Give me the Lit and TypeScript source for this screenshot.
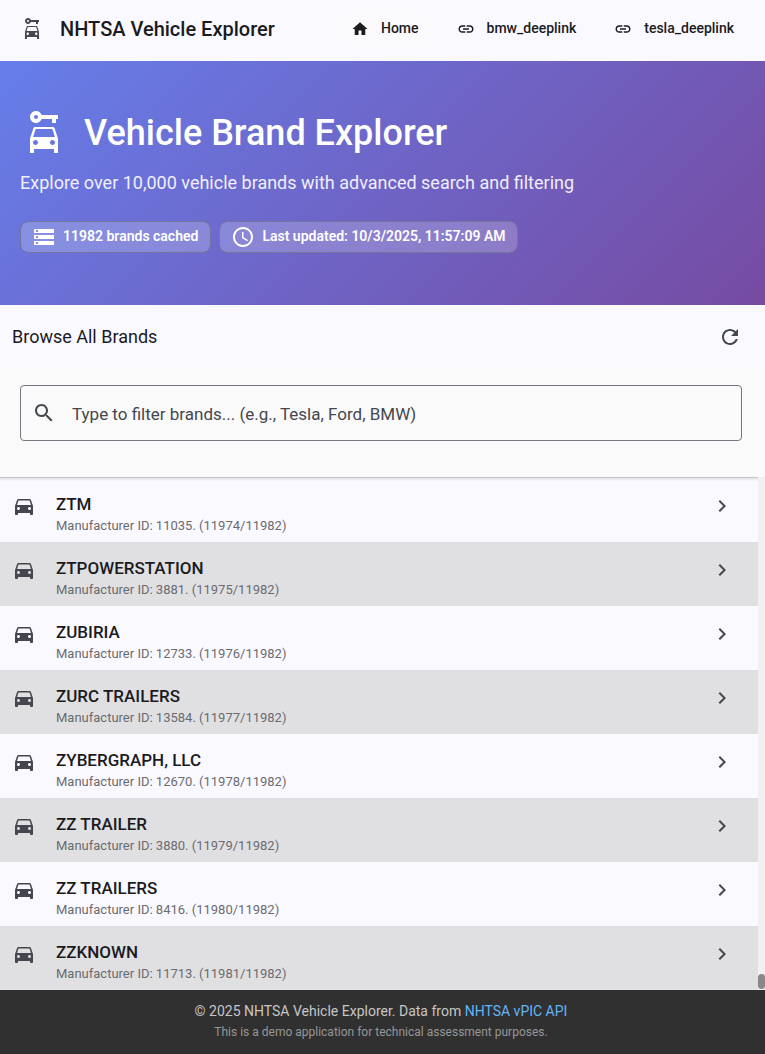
import { LitElement, html, css, svg } from "lit";
import { customElement, property } from "lit/decorators.js";

const icons: Record<string, string> = {
  home: "M10 20v-6h4v6h5v-8h3L12 3 2 12h3v8z",
  link: "M3.9 12c0-1.71 1.39-3.1 3.1-3.1h4V7H7c-2.76 0-5 2.24-5 5s2.24 5 5 5h4v-1.9H7c-1.71 0-3.1-1.39-3.1-3.1zM8 13h8v-2H8v2zm9-6h-4v1.9h4c1.71 0 3.1 1.39 3.1 3.1s-1.39 3.1-3.1 3.1h-4V17h4c2.76 0 5-2.24 5-5s-2.24-5-5-5z",
  storage: "M2 20h20v-4H2v4zm2-3h2v2H4v-2zM2 4v4h20V4H2zm4 3H4V5h2v2zm-4 7h20v-4H2v4zm2-3h2v2H4v-2z",
  schedule: "M11.99 2C6.47 2 2 6.48 2 12s4.47 10 9.99 10C17.52 22 22 17.52 22 12S17.52 2 11.99 2zM12 20c-4.42 0-8-3.58-8-8s3.58-8 8-8 8 3.58 8 8-3.58 8-8 8zm.5-13H11v6l5.25 3.15.75-1.23-4.5-2.67z",
  refresh: "M17.65 6.35C16.2 4.9 14.21 4 12 4c-4.42 0-7.99 3.58-7.99 8s3.57 8 7.99 8c3.73 0 6.84-2.55 7.73-6h-2.08c-.82 2.33-3.04 4-5.65 4-3.31 0-6-2.69-6-6s2.69-6 6-6c1.66 0 3.14.69 4.22 1.78L13 11h7V4l-2.35 2.35z",
  search: "M15.5 14h-.79l-.28-.27C15.41 12.59 16 11.11 16 9.5 16 5.91 13.09 3 9.5 3S3 5.91 3 9.5 5.91 16 9.5 16c1.61 0 3.09-.59 4.23-1.57l.27.28v.79l5 4.99L20.49 19l-4.99-5zm-6 0C7.01 14 5 11.99 5 9.5S7.01 5 9.5 5 14 7.01 14 9.5 11.99 14 9.5 14z",
  car: "M18.92 6.01C18.72 5.42 18.16 5 17.5 5h-11c-.66 0-1.21.42-1.42 1.01L3 12v8c0 .55.45 1 1 1h1c.55 0 1-.45 1-1v-1h12v1c0 .55.45 1 1 1h1c.55 0 1-.45 1-1v-8l-2.08-5.99zM6.5 16c-.83 0-1.5-.67-1.5-1.5S5.67 13 6.5 13s1.5.67 1.5 1.5S7.33 16 6.5 16zm11 0c-.83 0-1.5-.67-1.5-1.5s.67-1.5 1.5-1.5 1.5.67 1.5 1.5-.67 1.5-1.5 1.5zM5 11l1.5-4.5h11L19 11H5z",
  chevron: "M10 6 8.59 7.41 13.17 12l-4.58 4.59L10 18l6-6z",
  rental: "M10.83 3C10.41 1.83 9.3 1 8 1 6.34 1 5 2.34 5 4s1.34 3 3 3c1.3 0 2.41-.84 2.83-2H16v2h2V5h1V3h-8.17zM8 5c-.55 0-1-.45-1-1s.45-1 1-1 1 .45 1 1-.45 1-1 1zM16.4 9H7.6c-.43 0-.82.28-.95.69L5 14.7V22h2v-2h10v2h2v-7.3l-1.65-5.01A1 1 0 0 0 16.4 9zM7.85 10h8.3l1.32 4H6.53l1.32-4zM7.75 18c-.69 0-1.25-.56-1.25-1.25s.56-1.25 1.25-1.25S9 16.06 9 16.75 8.44 18 7.75 18zm8.5 0c-.69 0-1.25-.56-1.25-1.25s.56-1.25 1.25-1.25 1.25.56 1.25 1.25S16.94 18 16.25 18z",
};

@customElement("mat-glyph")
class MatGlyph extends LitElement {
  @property() name = "home";
  static styles = css`
    :host { display: block; flex: none; width: 24px; height: 24px; }
    svg { display: block; width: 100%; height: 100%; fill: currentColor; }
  `;
  render() {
    return html`<svg viewBox="0 0 24 24" aria-hidden="true">${svg`<path fill-rule="evenodd" d=${icons[this.name]}></path>`}</svg>`;
  }
}

interface Brand { name: string; id: number; }

const total = 11982;
const firstIndex = 11974;
const brands: Brand[] = [
  { name: "ZTM", id: 11035 },
  { name: "ZTPOWERSTATION", id: 3881 },
  { name: "ZUBIRIA", id: 12733 },
  { name: "ZURC TRAILERS", id: 13584 },
  { name: "ZYBERGRAPH, LLC", id: 12670 },
  { name: "ZZ TRAILER", id: 3880 },
  { name: "ZZ TRAILERS", id: 8416 },
  { name: "ZZKNOWN", id: 11713 },
];

@customElement("app-root")
class AppRoot extends LitElement {
  static styles = css`
    :host {
      display: flex;
      flex-direction: column;
      height: 100vh;
      background: #faf9ff;
      color: #1a1b1f;
      font-family: Roboto, "Liberation Sans", sans-serif;
    }
    * { box-sizing: border-box; }
    h1, h2, p, ul { margin: 0; padding: 0; font-weight: 400; }
    a { text-decoration: none; color: inherit; }
    button { border: 0; background: none; font: inherit; color: inherit; cursor: pointer; }

    .topbar {
      display: flex;
      align-items: center;
      justify-content: space-between;
      flex: none;
      height: 61px;
      padding: 0 17px 4px 20px;
    }
    .brand { display: flex; align-items: center; gap: 16px; font-size: 20px; line-height: 24px; font-weight: 500; }
    .brand mat-glyph { color: #44474e; }
    .nav { display: flex; gap: 10px; }
    .nav a {
      display: flex;
      align-items: center;
      gap: 12px;
      height: 40px;
      padding: 0 14px;
      border-radius: 20px;
      font-size: 14px;
      line-height: 20px;
      font-weight: 500;
    }
    .nav span, .chip span { padding-bottom: 2px; }
    .nav a.active { background: #fafafc; }
    .nav mat-glyph { width: 18px; height: 18px; }

    .hero {
      flex: none;
      padding: 48px 20px 52px;
      color: #fff;
      background: linear-gradient(135deg, #667eea 0%, #764ba2 100%);
    }
    .hero-title { display: flex; align-items: center; gap: 16px; font-size: 36px; line-height: 48px; font-weight: 500; }
    .hero-title mat-glyph { width: 48px; height: 48px; }
    .hero-text { margin-top: 12px; font-size: 18px; line-height: 28px; color: #f0eefc; }
    .chips { display: flex; flex-wrap: wrap; gap: 8px; margin-top: 24px; list-style: none; }
    .chip {
      display: flex;
      align-items: center;
      gap: 7px;
      height: 32px;
      padding: 0 12px 0 11px;
      border: 1px solid #74749c;
      border-radius: 8px;
      background: rgba(255, 255, 255, 0.2);
      background-clip: padding-box;
      font-size: 14px;
      line-height: 20px;
      font-weight: 600;
    }

    .heading {
      display: flex;
      align-items: center;
      justify-content: space-between;
      flex: none;
      height: 64px;
      padding: 0 11px 0 12px;
    }
    .heading h2 { font-size: 18px; line-height: 24px; }
    .refresh { display: grid; place-items: center; width: 48px; height: 48px; padding: 0; color: #44474e; }

    .search { flex: none; padding: 16px 23px 36px 20px; background: #fafafa; }
    .field {
      display: flex;
      align-items: center;
      gap: 16px;
      height: 56px;
      padding: 0 11px;
      border: 1px solid #74777f;
      border-radius: 4px;
      color: #44474e;
    }
    .field input {
      flex: 1;
      min-width: 0;
      padding: 1px 0 0;
      border: 0;
      outline: 0;
      background: none;
      font: 17px/24px Roboto, "Liberation Sans", sans-serif;
      color: #1a1b1f;
    }
    .field input::placeholder { color: #44474e; opacity: 1; }

    .viewport { display: flex; flex: 1; min-height: 0; }
    .list {
      flex: 1;
      overflow: hidden;
      list-style: none;
      border-top: 1px solid #c4c6d0;
      box-shadow: inset 0 4px 3px -3px #d8d8de;
    }
    .row {
      display: flex;
      align-items: flex-start;
      gap: 20px;
      width: 100%;
      height: 64px;
      padding: 16px 24px 0 12px;
      text-align: left;
    }
    .list li:nth-child(even) { background: #e0e0e2; }
    .row mat-glyph { color: #44474e; }
    .label { display: flex; flex-direction: column; flex: 1; }
    .name { font-size: 17px; line-height: 20px; font-weight: 500; }
    .meta { font-size: 13px; line-height: 24px; color: #6b6b6f; }
    .track { display: flex; align-items: flex-end; width: 7px; padding-bottom: 1px; background: #f1f1f1; }
    .thumb { width: 100%; height: 15px; border-radius: 4px; background: #888; }

    .footer {
      flex: none;
      height: 64px;
      padding: 11px 19px 0 16px;
      text-align: center;
      background: #303030;
      color: #c6c6c6;
      font-size: 14px;
      line-height: 20px;
    }
    .footer a { color: #64b5f6; }
    .footer .note { font-size: 12px; line-height: 22px; color: #979797; }
  `;

  render() {
    return html`
      <header class="topbar">
        <a class="brand" href="#"><mat-glyph name="rental"></mat-glyph><span>NHTSA Vehicle Explorer</span></a>
        <nav class="nav">
          <a class="active" href="#"><mat-glyph name="home"></mat-glyph><span>Home</span></a>
          <a href="#bmw"><mat-glyph name="link"></mat-glyph><span>bmw_deeplink</span></a>
          <a href="#tesla"><mat-glyph name="link"></mat-glyph><span>tesla_deeplink</span></a>
        </nav>
      </header>
      <section class="hero">
        <h1 class="hero-title"><mat-glyph name="rental"></mat-glyph>Vehicle Brand Explorer</h1>
        <p class="hero-text">Explore over 10,000 vehicle brands with advanced search and filtering</p>
        <ul class="chips">
          <li class="chip"><mat-glyph name="storage"></mat-glyph><span>${total} brands cached</span></li>
          <li class="chip"><mat-glyph name="schedule"></mat-glyph><span>Last updated: 10/3/2025, 11:57:09 AM</span></li>
        </ul>
      </section>
      <section class="heading">
        <h2>Browse All Brands</h2>
        <button class="refresh" aria-label="Refresh"><mat-glyph name="refresh"></mat-glyph></button>
      </section>
      <div class="search">
        <label class="field">
          <mat-glyph name="search"></mat-glyph>
          <input type="text" aria-label="Filter brands" placeholder="Type to filter brands... (e.g., Tesla, Ford, BMW)" />
        </label>
      </div>
      <div class="viewport">
        <ul class="list">
          ${brands.map((b, i) => html`
            <li>
              <button class="row">
                <mat-glyph name="car"></mat-glyph>
                <span class="label">
                  <span class="name">${b.name}</span>
                  <span class="meta">Manufacturer ID: ${b.id}. (${firstIndex + i}/${total})</span>
                </span>
                <mat-glyph name="chevron"></mat-glyph>
              </button>
            </li>`)}
        </ul>
        <div class="track"><div class="thumb"></div></div>
      </div>
      <footer class="footer">
        <p>© 2025 NHTSA Vehicle Explorer. Data from <a href="#api">NHTSA vPIC API</a></p>
        <p class="note">This is a demo application for technical assessment purposes.</p>
      </footer>
    `;
  }
}
